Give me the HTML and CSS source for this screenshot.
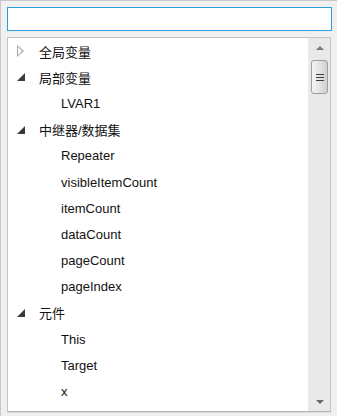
FILE: index.html
```html
<!DOCTYPE html>
<html lang="zh-CN">
<head>
    <meta charset="UTF-8">
    <title>变量选择</title>
    <link rel="stylesheet" href="styles.css">
</head>
<body>
    <div class="panel">
        <input class="search" type="text">

        <div class="tree-box">
            <ul class="tree">
                <li class="node"><span class="arrow closed"></span>全局变量</li>
                <li class="node"><span class="arrow open"></span>局部变量</li>
                <li class="leaf">LVAR1</li>
                <li class="node"><span class="arrow open"></span>中继器/数据集</li>
                <li class="leaf">Repeater</li>
                <li class="leaf">visibleItemCount</li>
                <li class="leaf">itemCount</li>
                <li class="leaf">dataCount</li>
                <li class="leaf">pageCount</li>
                <li class="leaf">pageIndex</li>
                <li class="node"><span class="arrow open"></span>元件</li>
                <li class="leaf">This</li>
                <li class="leaf">Target</li>
                <li class="leaf">x</li>
            </ul>

            <div class="scrollbar">
                <div class="sb-btn"><span class="sb-up"></span></div>
                <div class="sb-track">
                    <div class="sb-thumb">
                        <span></span><span></span><span></span>
                    </div>
                </div>
                <div class="sb-btn"><span class="sb-down"></span></div>
            </div>
        </div>
    </div>
</body>
</html>
```

FILE: styles.css
```css
html, body {
    margin: 0;
    height: 100%;
}
body {
    background-color: #f0f0f0;
    font-family: "Liberation Sans", "Noto Sans CJK SC", sans-serif;
    font-size: 13px;
    color: #111;
    border-top: 1px solid #c9c9c9;
    border-left: 1px solid #c9c9c9;
    box-sizing: border-box;
}
.panel {
    display: flex;
    flex-direction: column;
    gap: 6px;
    padding: 6px 5px 0 6px;
}
.search {
    display: block;
    height: 24px;
    margin: 0;
    padding: 0 4px;
    border: 1px solid #2d9be0;
    background-color: white;
    box-sizing: border-box;
    outline: none;
}
.tree-box {
    display: flex;
    height: 375px;
    margin-right: 1px;
    border: 1px solid #c4c4c4;
    border-bottom-color: #b4b4b4;
    background-color: white;
    box-sizing: border-box;
    box-shadow: 0 1px 0 #dcdcdc;
}
.tree {
    flex: 1;
    list-style: none;
    margin: 0;
    padding: 0;
    overflow: hidden;
}
.tree li {
    display: flex;
    align-items: center;
    height: 26.2px;
    white-space: nowrap;
}
.node {
    padding-left: 9px;
}
.leaf {
    padding-left: 53px;
}
.arrow {
    width: 8px;
    height: 12px;
    margin-right: 14px;
    position: relative;
}
.arrow.closed::before {
    content: "";
    position: absolute;
    left: 0;
    top: 0;
    border-style: solid;
    border-width: 6px 0 6px 7px;
    border-color: transparent transparent transparent #a8a8a8;
}
.arrow.closed::after {
    content: "";
    position: absolute;
    left: 1px;
    top: 2px;
    border-style: solid;
    border-width: 4px 0 4px 4px;
    border-color: transparent transparent transparent white;
}
.arrow.open::before {
    content: "";
    position: absolute;
    left: 0;
    top: 2px;
    border-style: solid;
    border-width: 0 0 8px 8px;
    border-color: transparent transparent #3a3a3a transparent;
}
.scrollbar {
    display: flex;
    flex-direction: column;
    width: 21px;
    background-color: #e9e9e9;
    border-left: 1px solid #ececec;
}
.sb-btn {
    height: 19px;
    display: flex;
    align-items: center;
    justify-content: center;
}
.sb-up {
    border-style: solid;
    border-width: 0 4px 4px 4px;
    border-color: transparent transparent #7a7a7a transparent;
}
.sb-down {
    border-style: solid;
    border-width: 4px 4px 0 4px;
    border-color: #6a6a6a transparent transparent transparent;
}
.sb-track {
    flex: 1;
    padding-top: 3px;
}
.sb-thumb {
    height: 34px;
    margin: 0 2px;
    border: 1px solid #9e9e9e;
    border-radius: 3px;
    background: linear-gradient(to right, #f4f4f4, #e2e2e2 55%, #d0d0d0);
    box-sizing: border-box;
    display: flex;
    flex-direction: column;
    align-items: center;
    justify-content: center;
    gap: 2px;
}
.sb-thumb span {
    display: block;
    width: 8px;
    height: 1px;
    background-color: #3c3c3c;
}
```
